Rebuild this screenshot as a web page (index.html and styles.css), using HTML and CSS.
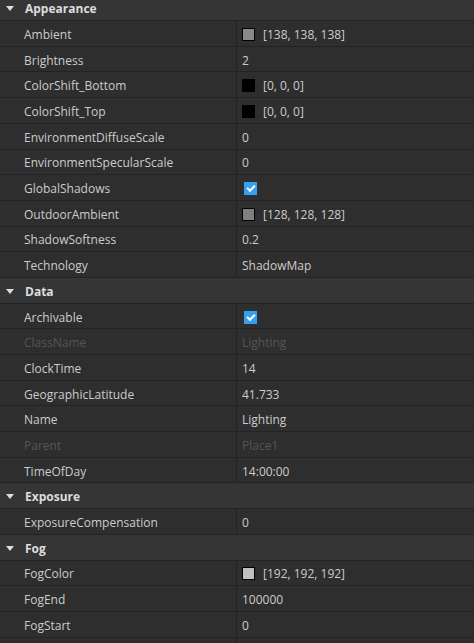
FILE: index.html
```html
<!DOCTYPE html>
<html lang="en">
<head>
  <meta charset="UTF-8">
  <title>Properties - Lighting</title>
  <link rel="stylesheet" href="styles.css">
</head>
<body>
  <div class="props">
    <div class="group-head"><span class="arrow"></span>Appearance</div>
    <div class="row"><div class="name">Ambient</div><div class="value"><span class="swatch" style="background:#8a8a8a"></span>[138, 138, 138]</div></div>
    <div class="row"><div class="name">Brightness</div><div class="value">2</div></div>
    <div class="row"><div class="name">ColorShift_Bottom</div><div class="value"><span class="swatch" style="background:#000"></span>[0, 0, 0]</div></div>
    <div class="row"><div class="name">ColorShift_Top</div><div class="value"><span class="swatch" style="background:#000"></span>[0, 0, 0]</div></div>
    <div class="row"><div class="name">EnvironmentDiffuseScale</div><div class="value">0</div></div>
    <div class="row"><div class="name">EnvironmentSpecularScale</div><div class="value">0</div></div>
    <div class="row"><div class="name">GlobalShadows</div><div class="value"><span class="check"></span></div></div>
    <div class="row"><div class="name">OutdoorAmbient</div><div class="value"><span class="swatch" style="background:#808080"></span>[128, 128, 128]</div></div>
    <div class="row"><div class="name">ShadowSoftness</div><div class="value">0.2</div></div>
    <div class="row"><div class="name">Technology</div><div class="value">ShadowMap</div></div>

    <div class="group-head"><span class="arrow"></span>Data</div>
    <div class="row"><div class="name">Archivable</div><div class="value"><span class="check"></span></div></div>
    <div class="row disabled"><div class="name">ClassName</div><div class="value">Lighting</div></div>
    <div class="row"><div class="name">ClockTime</div><div class="value">14</div></div>
    <div class="row"><div class="name">GeographicLatitude</div><div class="value">41.733</div></div>
    <div class="row"><div class="name">Name</div><div class="value">Lighting</div></div>
    <div class="row disabled"><div class="name">Parent</div><div class="value">Place1</div></div>
    <div class="row"><div class="name">TimeOfDay</div><div class="value">14:00:00</div></div>

    <div class="group-head"><span class="arrow"></span>Exposure</div>
    <div class="row"><div class="name">ExposureCompensation</div><div class="value">0</div></div>

    <div class="group-head"><span class="arrow"></span>Fog</div>
    <div class="row"><div class="name">FogColor</div><div class="value"><span class="swatch" style="background:#c0c0c0"></span>[192, 192, 192]</div></div>
    <div class="row"><div class="name">FogEnd</div><div class="value">100000</div></div>
    <div class="row"><div class="name">FogStart</div><div class="value">0</div></div>
    <div class="row"><div class="name"></div><div class="value"></div></div>
  </div>
</body>
</html>
```

FILE: styles.css
```css
body {
  margin: 0;
  background-color: #2e2e2e;
  font-family: "Open Sans", "Noto Sans", sans-serif;
  font-size: 12px;
  color: #cccccc;
  overflow: hidden;
}
.props {
  margin-top: -4.6px;
}
.group-head {
  display: flex;
  align-items: center;
  height: 25.7px;
  padding-top: 2px;
  background-color: #353535;
  border-bottom: 1px solid #232323;
  box-sizing: border-box;
  font-weight: bold;
  color: #dddddd;
  padding-left: 6px;
}
.arrow {
  width: 0;
  height: 0;
  border-left: 4px solid transparent;
  border-right: 4px solid transparent;
  border-top: 5px solid #dddddd;
  margin-right: 11px;
}
.row {
  display: grid;
  grid-template-columns: 237px 1fr;
  height: 25.7px;
  border-bottom: 1px solid #232323;
  box-sizing: border-box;
}
.name {
  display: flex;
  align-items: center;
  padding-left: 24px;
  padding-top: 2px;
  border-right: 1px solid #232323;
}
.value {
  display: flex;
  align-items: center;
  padding-left: 5px;
  padding-top: 2px;
}
.disabled {
  color: #555555;
}
.swatch {
  width: 11px;
  height: 11px;
  border: 1px solid #000;
  margin-right: 8px;
}
.check {
  width: 13px;
  height: 13px;
  margin-left: 2px;
  background-color: #35a0f0;
  position: relative;
}
.check::after {
  content: "";
  position: absolute;
  left: 3px;
  top: 3px;
  width: 6px;
  height: 3px;
  border-left: 2px solid #fff;
  border-bottom: 2px solid #fff;
  transform: rotate(-45deg);
}
```
